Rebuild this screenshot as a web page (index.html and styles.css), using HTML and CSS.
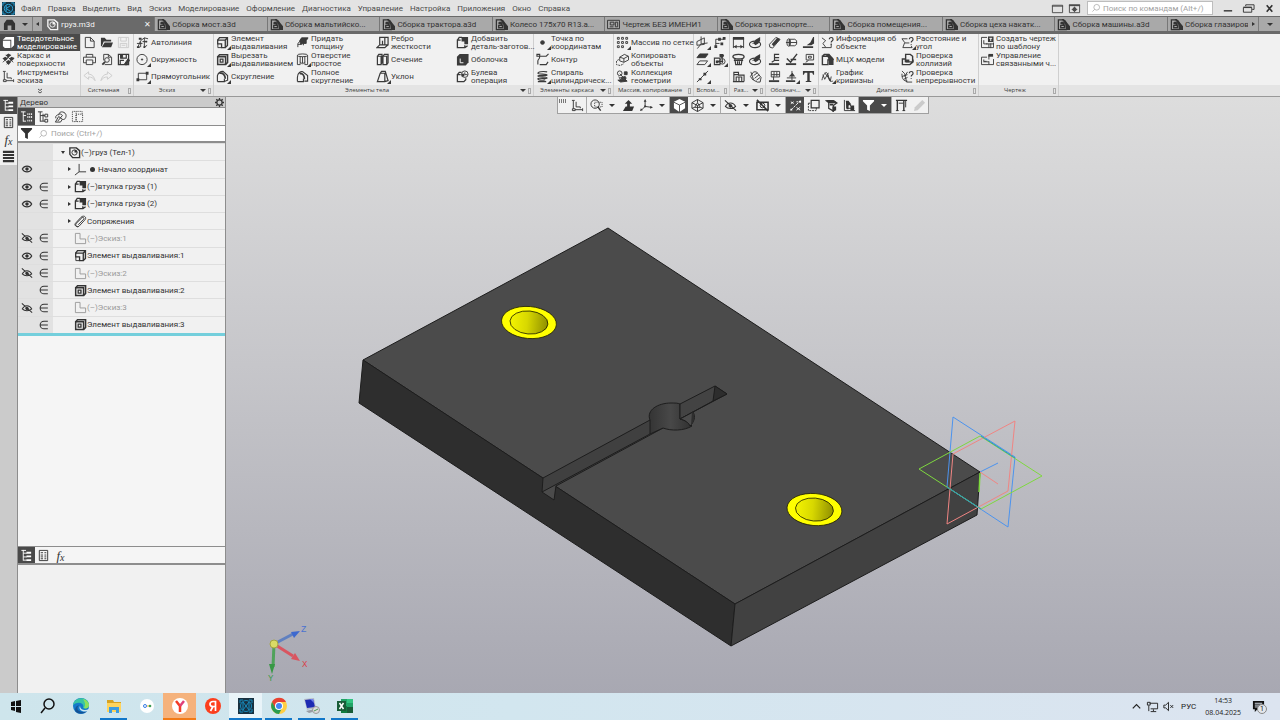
FILE: index.html
```html
<!DOCTYPE html>
<html lang="ru">
<head>
    <meta charset="UTF-8">
    <meta name="viewport" content="width=device-width, initial-scale=1.0">
    <title>груз.m3d</title>
    <link rel="stylesheet" href="styles.css">
</head>
<body>
    <!-- Icon set -->
    <svg class="sprite" aria-hidden="true">
        <symbol id="logo" viewBox="0 0 14 14"><path fill="#173443" stroke="none" d="M0 0h14v14H0z"/><path stroke="#2aa7dd" d="M1 4V1h3M10 1h3v3M13 10v3h-3M4 13H1v-3M4.500 3.500v7M4.500 7L9 4M4.500 7L9 10M7 2.500a4.500 4.500 0 1 1 0 9a4.500 4.500 0 0 1 0-9"/></symbol>
        <symbol id="part" viewBox="0 0 14 14"><path stroke-width="1.500" d="M2 2h7l3.500 3v7.500H5L2 9z"/><circle cx="7" cy="7" r="2.800"/><path fill="currentColor" stroke="none" d="M7 7V4a3 3 0 0 1 3 3z"/></symbol>
        <symbol id="asm" viewBox="0 0 14 14"><path fill="currentColor" stroke="none" d="M5 1h2l3 3 4 5v4h-4L9 7z"/><path stroke-width="1.400" d="M1.500 12.500V2H6c3 0 4 3 4 6v4.500zM4 6c0-2 4-2 4 1M4 6h2l2 2v2.500H4V8h4"/></symbol>
        <symbol id="sheet" viewBox="0 0 14 14"><path d="M.5 2.500h13v9H.5zM3.500 4.500h4v3h-4zM9 4.500h2.500v5H9zM3 9.500h4"/></symbol>
        <symbol id="home" viewBox="0 0 14 14"><path fill="currentColor" stroke="none" d="M1 13V6l3-4h6l3 4v7H9V8H5v5z"/></symbol>
        <symbol id="window" viewBox="0 0 14 14"><path d="M1.500 3.500h11v8h-11z"/><path d="M1 4.500h12"/></symbol>
        <symbol id="wingear" viewBox="0 0 14 14"><path d="M1.500 3.500h11v8h-11z"/><path stroke-width="2" d="M1 3.500h12"/><circle cx="7" cy="8" r="1.500" stroke-width="1.500"/><path d="M7 5v6M4 8h6"/></symbol>
        <symbol id="search" viewBox="0 0 14 14"><circle cx="8" cy="6" r="4"/><path d="M5 9l-3 3"/></symbol>
        <symbol id="solid" viewBox="0 0 14 14"><path fill="currentColor" stroke="none" d="M4 1h9v9l-3 3V4H1z"/><path fill="currentColor" stroke="none" d="M1 5h8v8H3L1 11z"/></symbol>
        <symbol id="surface" viewBox="0 0 14 14"><path fill="currentColor" stroke="none" d="M7 .5l3 2-3 2-3-2zM3.500 4l3 2-3 2.500-3-2.500zM10.500 4l3 2-3 2.500-3-2.500zM7 7.500l3 2-3 3.500-3-3.500z"/><path d="M1 10l8-8M5 12l8-7M4 2l8 8"/></symbol>
        <symbol id="sketchtools" viewBox="0 0 14 14"><path d="M2.500 2v8.500M1 1.500h3M1.500 10.500h3v2h-3zM4.500 11.500H12M12.500 10v3M5.500 3v5.500H10V10"/></symbol>
        <symbol id="new" viewBox="0 0 14 14"><path d="M2.500 1.500H8l4 4v7H2.500zM8 1.500v4h4"/></symbol>
        <symbol id="open" viewBox="0 0 14 14"><path fill="currentColor" stroke="none" d="M1 2h4l2 2h5v2H4l-2 5H1zM5 7h9l-2 5H2z"/></symbol>
        <symbol id="save" viewBox="0 0 14 14"><path d="M1.500 1.500h11v11h-11zM4 1.500v4h6v-4M3.500 12V8h7v4M5 10h4"/></symbol>
        <symbol id="saveas" viewBox="0 0 14 14"><path stroke-width="1.300" d="M1.500 1.500h11v11h-11zM4 1.500v4h6v-4M3.500 12V8h4"/><path fill="currentColor" d="M8 12l4-6 1.500 2-3.500 5zM4 2h2v3H4z"/></symbol>
        <symbol id="print" viewBox="0 0 14 14"><path d="M3.500 4.500V1.500h7v3M3.500 10.500h-3v-6h13v6h-3M3.500 7.500h7v5h-7z"/></symbol>
        <symbol id="preview" viewBox="0 0 14 14"><path d="M4 8V1.500h5l3.500 3v8H5M9 1.500v3h3"/><circle cx="7.500" cy="7.500" r="2.500"/><path stroke-width="2" d="M5.500 9.500l-3 3"/></symbol>
        <symbol id="undo" viewBox="0 0 14 14"><path d="M6 2L1 6l5 4V7.500c3 0 5 1 7 4-1-4-3-7-7-7z"/></symbol>
        <symbol id="redo" viewBox="0 0 14 14"><path d="M8 2l5 4-5 4V7.500c-3 0-5 1-7 4 1-4 3-7 7-7z"/></symbol>
        <symbol id="autoline" viewBox="0 0 14 14"><path d="M2 12L5 5l4-3 4 1M5 12V6M1 8h6M9 2v10l3-2M7 6h5"/><path fill="currentColor" stroke="none" d="M1 11h3v2H1zM3 2h3v2H3zM8 11h2v2H8zM10 5h2v2h-2z"/></symbol>
        <symbol id="circle" viewBox="0 0 14 14"><circle cx="6.500" cy="7" r="5.500"/><circle cx="6.500" cy="7" r=".7" fill="currentColor"/></symbol>
        <symbol id="rect" viewBox="0 0 14 14"><path d="M2.500 3.500h9v7h-9z"/><path fill="currentColor" stroke="none" d="M.5 9h3v3h-3zM10.500 2h3v3h-3z"/></symbol>
        <symbol id="extrude" viewBox="0 0 14 14"><path stroke-width="1.500" d="M1.800 4.500l2-2.700h8.500v8.500l-2.300 2.200M10 4.500l2-2.500"/><path stroke-width="1.400" d="M1.800 4.500H10v8H6V8.500H1.800z"/><path d="M2 8.500v4h4"/></symbol>
        <symbol id="cut" viewBox="0 0 14 14"><path stroke-width="1.600" d="M1.800 4h8.500v8.500H1.800zM1.800 4l2-2.200h8.700v8.500l-2.200 2.200"/><path stroke-width="1.400" d="M4.500 6.500h3v3.300h-3z"/></symbol>
        <symbol id="fillet" viewBox="0 0 14 14"><path stroke-width="1.200" d="M1.500 12.500V6c1-3 3-4.500 6-4.500L12.500 6v5L9 12.500M1.500 12.500H9V9.500"/><path stroke-width="1.800" d="M3.500 3.500c4-1 6.500 2 6.500 6"/></symbol>
        <symbol id="thick" viewBox="0 0 14 14"><path fill="currentColor" d="M4 5l2-3h7l-2 3v3L8 8l-3 1z"/><path d="M2 12V8l3-3M2 9h4M8 5v5"/></symbol>
        <symbol id="hole" viewBox="0 0 14 14"><path d="M1.500 2.500v10h3V4M12.500 2.500v10h-3V4M4.500 9.500L7 12l2.500-2.500M7 4v7"/><ellipse cx="7" cy="2.500" rx="5.500" ry="1.500"/></symbol>
        <symbol id="full" viewBox="0 0 14 14"><path stroke-width="1.200" d="M1.500 12.500V8c0-5 4-7 6-6l5 4v6H9M1.500 12.500H8V9.500"/><path stroke-width="1.800" d="M4 4c4-1 5 3 5 6"/></symbol>
        <symbol id="rib" viewBox="0 0 14 14"><path stroke-width="1.300" d="M4 1.500h9v8H4zM4 9.500l-3 3h8.500l3.500-3M9.500 2v7.500M7 9.500V5"/></symbol>
        <symbol id="section" viewBox="0 0 14 14"><path stroke-width="1.300" d="M1.500 3.500h4v9h-4zM7.500 3.500h4v9h-4zM1.500 3.500l1.500-2h3.500v8.500l-1 2M7.500 3.500l1.500-2h4v9l-1.500 2"/></symbol>
        <symbol id="draft" viewBox="0 0 14 14"><path stroke-width="1.300" d="M1.500 12.500l3-9h5v9zM4.500 3.500l1.500-2h4l3 10-3.500 1"/></symbol>
        <symbol id="addpart" viewBox="0 0 14 14"><path stroke-width="1.400" d="M5 4.500H1.500v8h8V10M1.500 4.500l2-3h3M9.500 12.500l3-2"/><path fill="currentColor" stroke="none" d="M6 1h7v8h-4V6H6z"/></symbol>
        <symbol id="shell" viewBox="0 0 14 14"><path fill="currentColor" stroke="none" d="M1 4l3-3h9.500v9l-3 3.500H1z"/><path stroke="#fff" d="M4.500 6v4.500H8"/></symbol>
        <symbol id="bool" viewBox="0 0 14 14"><path stroke-width="1.400" d="M5 5H1.500v7.500h7l2-2V9M1.500 5l2-2.500H6"/><circle cx="9.500" cy="4.500" r="3.500"/><path fill="currentColor" stroke="none" d="M6 4h3v3H6z"/><path d="M9.500 2.500v2.500h3"/></symbol>
        <symbol id="point" viewBox="0 0 14 14"><circle cx="7" cy="7" r="2" fill="currentColor"/></symbol>
        <symbol id="contour" viewBox="0 0 14 14"><path stroke-width="1.200" d="M4 12.500h7l2-3M2 12.500V9c0-3 2-1 2-5.500h7L13.500 1M1 1.500h3v2H1z"/></symbol>
        <symbol id="spiral" viewBox="0 0 14 14"><path stroke-width="1.200" d="M12 2c-5-1-10 0-10 1.500S12 4 12 5.500 2 5 2 6.500 12 7 12 8.500 2 8 2 9.500s5 2 8 1M2 12.500h9"/></symbol>
        <symbol id="grid" viewBox="0 0 14 14"><path d="M1.500 1.500h2v2h-2zM6 1.500h2v2H6zM10.500 1.500h2v2h-2zM1.500 6h2v2h-2zM6 6h2v2H6zM10.500 6h2v2h-2zM1.500 10.500h2v2h-2zM6 10.500h2v2H6z"/></symbol>
        <symbol id="copy" viewBox="0 0 14 14"><path d="M4 4.500l5-3 4.500 2v4L8.500 10 4 8.500zM4 4.500l4.500 1.500v4M13 3.500L8.500 6"/><path stroke-dasharray="2 1" d="M3 7L.5 8.500v4l4 1 4-2"/></symbol>
        <symbol id="geomcoll" viewBox="0 0 14 14"><circle cx="4" cy="3.500" r="2.500"/><path fill="currentColor" d="M9 2h3v3H9zM5 8l5-1 1 2-5 1zM2 11l8-1 2 2-7 1z"/><path d="M4 4l7 7M3 7l2 4"/></symbol>
        <symbol id="plane" viewBox="0 0 14 14"><path d="M5.500.5v8l7-1M5.500 8.500l-4 5M1 10V6l8-4v7z"/></symbol>
        <symbol id="nodes" viewBox="0 0 14 14"><path d="M3 12V3.500h9M3 8h4"/><path fill="currentColor" stroke="none" d="M1.500 10h3v3h-3zM5.500 2h3v3h-3zM10.500 1h3v3h-3zM8 7h3v3H8z"/></symbol>
        <symbol id="planes" viewBox="0 0 14 14"><path fill="currentColor" d="M4 1h9l-3 4H1z"/><path d="M4 8.500h8.500l-3 4H1z"/></symbol>
        <symbol id="shapes" viewBox="0 0 14 14"><path stroke-width="1.200" d="M1.500 5.500h6v7h-6zM4 9h7M10 6v5"/><circle cx="10" cy="9" r="3"/><path fill="currentColor" stroke="none" d="M7 1h4l1 2-2 3-3-2zM3 8h3v3H3z"/></symbol>
        <symbol id="axis" viewBox="0 0 14 14"><path d="M1 13L13 1"/><path fill="currentColor" stroke="none" d="M3 9h3v2H3zM8 3h3v3H8z"/></symbol>
        <symbol id="dim" viewBox="0 0 14 14"><path d="M1.500 2v11M12.500 2v11M1.500 11.500h11"/><path fill="currentColor" stroke="none" d="M1 1h12v3H1zM2 11.500l3-2v4zM12 11.500l-3-2v4z"/></symbol>
        <symbol id="dimr" viewBox="0 0 14 14"><ellipse cx="6.500" cy="9" rx="6" ry="3.500" stroke-width="1.200"/><path fill="currentColor" stroke="none" d="M3 9l3-3 1-2 5-3v4l-2 3-3 2-2-2z"/></symbol>
        <symbol id="dimd" viewBox="0 0 14 14"><ellipse cx="7" cy="4" rx="6" ry="2.500" stroke-width="1.500"/><path stroke-width="1.300" d="M3 6l1 6.500h6L11 6M2 8h10M6 9v3M8 9v3"/></symbol>
        <symbol id="dimb" viewBox="0 0 14 14"><path stroke-width="1.200" d="M2 12.500V2.500h5v3h6v7M4.500 12V7.500h6V12M2 5h5M7.500 8v4M1 12.500h12"/></symbol>
        <symbol id="dima" viewBox="0 0 14 14"><path d="M2 2l3 9 4 2h3l1-5-5-6H5L1.500 7l3 4M5 6l4-3M6 9l5-4M8 11l4-3"/></symbol>
        <symbol id="bolt" viewBox="0 0 14 14"><path d="M1.500 9l7-7.500 4.500 2L5 13l-3-1z"/><path fill="currentColor" stroke="none" d="M4 9l6-7 3 2-7 7z"/></symbol>
        <symbol id="thread" viewBox="0 0 14 14"><path d="M4.500 3.500h6L12.500 5v4l-2 1.500h-6zM5 3.500v7M1 7h12"/><ellipse cx="4" cy="7" rx="2" ry="4"/></symbol>
        <symbol id="tag" viewBox="0 0 14 14"><path fill="currentColor" stroke="none" d="M1 11h11v2H1zM5 10l4-3 3-6h1v7l-3 2z"/></symbol>
        <symbol id="tage" viewBox="0 0 14 14"><path fill="currentColor" stroke="none" d="M1 11h11v2H1z"/><path stroke-width="1.300" d="M4 10l3-2V1.500h5M7 5h5M7 8h5"/></symbol>
        <symbol id="tagv" viewBox="0 0 14 14"><path fill="currentColor" stroke="none" d="M1 11h11v2H1z"/><path stroke-width="1.500" d="M2 6l4 4 7-9M6 7h6"/></symbol>
        <symbol id="tagb" viewBox="0 0 14 14"><path fill="currentColor" stroke="none" d="M1 11h12v2H1z"/><path d="M4.500 1.500h8v6h-8zM7 3.500h3v2H7zM7 8l-3 2"/></symbol>
        <symbol id="tagg" viewBox="0 0 14 14"><path fill="currentColor" stroke="none" d="M1 11h11v2H1z"/><path d="M3.500 1.500h9v6h-9zM6.500 2v5M9.500 2v5M3.500 5h9M6 7v4"/></symbol>
        <symbol id="taga" viewBox="0 0 14 14"><path fill="currentColor" stroke="none" d="M1 11h10v2H1zM4 7h7L8 3z"/><path d="M7.500 1v10M2 8.500h10"/></symbol>
        <symbol id="letter" viewBox="0 0 14 14"><path fill="currentColor" stroke="none" d="M1 1h12v4h-1l-1-2H8.300v8.500l1.700.5v1H4v-1l1.700-.5V3H3L2 5H1z"/></symbol>
        <symbol id="info" viewBox="0 0 14 14"><path d="M1 2l4 3-3 3 3 4M1 12.500h10V8"/><path stroke-width="1.300" d="M9 3.500c0-2.500 4-2.500 4 0S11 5 11 7M11 8.500v1"/></symbol>
        <symbol id="mass" viewBox="0 0 14 14"><path stroke-width="1.500" d="M1.500 3.500v9h6v-5l5-.500-4-3.500zM1.500 3.500l2-2H9"/><path fill="currentColor" stroke="none" d="M4 1h5l4.500 5v7h-5V8L7 4z"/></symbol>
        <symbol id="graph" viewBox="0 0 14 14"><path d="M1 11c2-9 6-11 7-4s3 5 5 5M2 5l2 5 4-7M4 3l6 8M7 5l3 7 1-5"/></symbol>
        <symbol id="dist" viewBox="0 0 14 14"><path d="M7 3H1l3 4-2 5.500h10l-1-2M4 7.500h5"/><path stroke-width="1.300" d="M9 3.500c0-2.500 4-2.500 4 0S11 5 11 7M11 8.500v1"/></symbol>
        <symbol id="collide" viewBox="0 0 14 14"><path stroke-width="1.500" d="M5 6.500H1.500v6h8l3.500-3V7M5 9.500v-8h5l2.500 2v6H5"/><path fill="currentColor" stroke="none" d="M4 7h5v3H4z"/></symbol>
        <symbol id="contin" viewBox="0 0 14 14"><path d="M1 1l3 3 2 9h6M1 4c0 6 2 8 6 8M1 7l6-2M7 2L4 7M3 10l4-2"/><path stroke-width="1.300" d="M9 3.500c0-2.500 4-2.500 4 0S11 5 11 7M11 8.500v1"/></symbol>
        <symbol id="makedraw" viewBox="0 0 14 14"><path d="M.5 4V1.500h6M.5 4v8.500h13V7M3 4.500v4h4M5.500 8.500h8M8.500 8.500v4M10.500 8v5"/><path fill="currentColor" stroke="none" d="M7.500.5h6v6h-6z"/><path stroke="#fff" d="M9 2.500h3M10.500 2.500v3"/></symbol>
        <symbol id="linkdraw" viewBox="0 0 14 14"><path d="M.5 4.500h6M.5 4.500v8h13v-6M3 7v2h3M2.500 9.500h6M8.500 9v3.500M8.500 2v5"/><path fill="currentColor" stroke="none" d="M8 1h5v3H8z"/></symbol>
        <symbol id="tree" viewBox="0 0 14 14"><path d="M3.500 1v11.500M1.500 1.500h5M3.500 4.500h4M3.500 8.500h4M3.500 12h4"/><path fill="currentColor" stroke="none" d="M7 3h5v2H7zM7 7h5v2H7zM7 11h5v2H7z"/></symbol>
        <symbol id="treedots" viewBox="0 0 14 14"><path d="M3.500 2v10.500M3.500 6h3M3.500 12h3M1 2h5"/><path stroke-dasharray="1 1" stroke-width="2" d="M8 4.500h6M8 7.500h6M8 11.500h6"/></symbol>
        <symbol id="branch" viewBox="0 0 14 14"><path d="M3.500 2v10.500M1 2h5M3.500 6h5M3.500 12h5M6.500 4v8"/><path d="M8.500 4.500h3v3h-3zM8.500 10h3v3h-3z"/></symbol>
        <symbol id="cloud" viewBox="0 0 14 14"><path d="M2 9c-1-3 2-4 3-4 1-5 8-3 8 1 0 3-2 5-4 4M5 5c1-1 3-1 4 1M4 12l5-6M1.500 13L5 7l4 3-2 3z"/></symbol>
        <symbol id="dotbox" viewBox="0 0 14 14"><path stroke-dasharray="1 1" d="M1.500 1.500h4v11h-4zM5.500 4.500h7v8h-7zM6 1.500h6v3"/></symbol>
        <symbol id="filter" viewBox="0 0 14 14"><path fill="currentColor" stroke="none" d="M1 1h12v1.500L8.500 7v6l-3-1.500V7L1 2.500z"/></symbol>
        <symbol id="props" viewBox="0 0 14 14"><path d="M2.500 1.500h9v11h-9zM4 4h2.500M8 4h2M4 6.500h2.500M8 6.500h2M4 8.500h2.500M8 8.500h2M4 10.500h2.500M8 10.500h2"/></symbol>
        <symbol id="layers" viewBox="0 0 14 14"><path stroke-width="2.200" d="M1 2h12M1 5.300h12M1 8.700h12M1 12h12"/></symbol>
        <symbol id="gear" viewBox="0 0 14 14"><circle cx="7" cy="7" r="4" stroke-width="1.800"/><path stroke-width="2" d="M7 0v3M7 11v3M0 7h3M11 7h3M2 2l2 2M10 10l2 2M12 2l-2 2M4 10l-2 2"/></symbol>
        <symbol id="eye" viewBox="0 0 14 14"><path stroke-width="1.300" d="M1.500 7C4 2.500 10 2.500 12.500 7 10 11.500 4 11.500 1.500 7z"/><circle cx="7" cy="7" r="1.500" fill="currentColor"/></symbol>
        <symbol id="noeye" viewBox="0 0 14 14"><path stroke-width="1.200" d="M1.500 8C4 3 10 3 12.500 8 10 11 4 11 1.500 8zM1 1.500l12 11"/><circle cx="7" cy="7.500" r="1.500" fill="currentColor"/></symbol>
        <symbol id="member" viewBox="0 0 14 14"><path stroke-width="1.200" d="M11.500 2.500H7a4.500 4.500 0 0 0 0 9h4.500M2.500 7h9"/></symbol>
        <symbol id="origin" viewBox="0 0 14 14"><path d="M5.500 1v8.500H13M5.500 9.500L1 13"/></symbol>
        <symbol id="clip" viewBox="0 0 14 14"><path d="M1.500 9l6-6.500c3-3 7 0 4 3l-6 6.500c-2 2-5-1-3-3l6-6c1-1 3 0 2 1.500l-6 6M1.500 9c-1.500 2 1 4 3 3.500"/></symbol>
        <symbol id="sketch" viewBox="0 0 14 14"><path d="M1.500 1.500h5v6h6v5h-11z"/></symbol>
        <symbol id="zoomin" viewBox="0 0 14 14"><circle cx="5.500" cy="5.500" r="4.500"/><path stroke-width="1.500" d="M8.500 8.500l3 4"/><path stroke-dasharray="1 1" d="M5 3.500h8v5H5z"/></symbol>
        <symbol id="orient" viewBox="0 0 14 14"><path fill="currentColor" stroke="none" d="M4 8h9l-2 5H1zM5.500 10V5H3l4-4 4 4H8.500v5z"/></symbol>
        <symbol id="axes" viewBox="0 0 14 14"><path d="M5.500 2v6l7 1M5.500 8l-4 4"/><path fill="currentColor" stroke="none" d="M5.500 0L7 3H4zM14 9l-3-1.500v3zM0 13l1-3 2 2zM4.500 7h2v2h-2z"/></symbol>
        <symbol id="cube" viewBox="0 0 14 14"><path fill="currentColor" stroke="none" d="M7 0l6 3v7l-6 4-6-4V3z"/><path stroke="#4a4a4a" d="M1 3.500l6 3 6-3M7 6.500V14"/></symbol>
        <symbol id="wire" viewBox="0 0 14 14"><path d="M7 .5L13 4v6l-6 3.500L1 10V4zM1 4l6 3 6-3M7 7v6.500M7 .5V4l-3 5L1 10M4 9h6l3 1M10 9L7 4"/></symbol>
        <symbol id="camera" viewBox="0 0 14 14"><path stroke-width="1.700" d="M1 3.500h12v8H1zM1 1l12 12"/><circle cx="7" cy="7" r="2.500"/></symbol>
        <symbol id="snap" viewBox="0 0 14 14"><path stroke-dasharray="3 1" d="M2 12L12 2"/><path d="M2 3l3 2M2 5l3-2M8 3h2M8 9l4 3M8 12l4-3"/><path fill="currentColor" stroke="none" d="M1.500 10.500h2v2h-2zM11 2h2v2h-2z"/></symbol>
        <symbol id="boxes" viewBox="0 0 14 14"><path stroke-width="1.300" d="M4.500 1.500h8.500v8H4.500z"/><path stroke-dasharray="2 1" d="M1.500 4.500v8h8.500M1.500 4.500h3M10 9.500v3"/></symbol>
        <symbol id="fold" viewBox="0 0 14 14"><path stroke-width="1.300" d="M1.500 2h8l3 2H4zM4 4v6l5 3V7l4-3"/><path fill="currentColor" stroke="none" d="M1 1h8l4 3H4zM8 8h4v4l-4 2zM5 5h4v2H5z"/></symbol>
        <symbol id="dyn" viewBox="0 0 14 14"><path d="M1.500 1v11.500H13M4 3v7h8M4 3l7 7"/><path fill="currentColor" stroke="none" d="M3 2h3l3 4-3 1v4H4zM8 7h4v5H8z"/></symbol>
        <symbol id="caliper" viewBox="0 0 14 14"><path stroke-width="1.500" d="M1 1.500h12M2.500 2v11M9.500 2v11"/><path d="M4 4.500h5M11.500 2v7M1 12.500h3M8 12.500h3"/></symbol>
        <symbol id="pencil" viewBox="0 0 14 14"><path fill="currentColor" stroke="none" d="M10 1l3 3-8 8-4 1 1-4z"/></symbol>
    </svg>

    <div class="app">
        <header class="menubar">
            <svg class="icon logo"><use href="#logo"/></svg>
            <nav class="menu">
                <button>Файл</button>
                <button>Правка</button>
                <button>Выделить</button>
                <button>Вид</button>
                <button>Эскиз</button>
                <button>Моделирование</button>
                <button>Оформление</button>
                <button>Диагностика</button>
                <button>Управление</button>
                <button>Настройка</button>
                <button>Приложения</button>
                <button>Окно</button>
                <button>Справка</button>
            </nav>
            <div class="window-tools">
                <button aria-label="Экран"><svg class="icon"><use href="#window"/></svg></button>
                <button aria-label="Настройка экрана"><svg class="icon"><use href="#wingear"/></svg></button>
                <label class="command-search">
                    <svg class="icon"><use href="#search"/></svg>
                    <input type="text" placeholder="Поиск по командам (Alt+/)" aria-label="Поиск по командам">
                </label>
                <button class="sys" aria-label="Свернуть"><svg class="icon" viewBox="0 0 14 14"><path stroke-width="1.500" d="M3 9.500h9"/></svg></button>
                <button class="sys" aria-label="Восстановить"><svg class="icon" viewBox="0 0 14 14"><path d="M4 4.500V3h9v5h-2M1.500 6h9v5h-9zM1.500 5.500h9"/></svg></button>
                <button class="sys" aria-label="Закрыть"><svg class="icon" viewBox="0 0 14 14"><path stroke-width="1.800" d="M4 3.500l6 7M10 3.500l-6 7"/></svg></button>
            </div>
        </header>

        <div class="tabs">
            <button class="tab-home" aria-label="Главная"><svg class="icon"><use href="#home"/></svg></button>
            <button class="tab-drop" aria-label="Список"><span class="caret"></span></button>
            <button class="tab-prev" aria-label="Назад"><span class="caret left"></span></button>
            <div class="tab-list">
                <button class="tab active"><svg class="icon"><use href="#part"/></svg><span>груз.m3d</span><i class="close"></i></button>
                <button class="tab"><svg class="icon"><use href="#asm"/></svg><span>Сборка мост.a3d</span></button>
                <button class="tab"><svg class="icon"><use href="#asm"/></svg><span>Сборка мальтийско...</span></button>
                <button class="tab"><svg class="icon"><use href="#asm"/></svg><span>Сборка трактора.a3d</span></button>
                <button class="tab"><svg class="icon"><use href="#asm"/></svg><span>Колесо 175x70 R13.a...</span></button>
                <button class="tab"><svg class="icon"><use href="#sheet"/></svg><span>Чертеж БЕЗ ИМЕНИ1</span></button>
                <button class="tab"><svg class="icon"><use href="#asm"/></svg><span>Сборка транспорте...</span></button>
                <button class="tab"><svg class="icon"><use href="#asm"/></svg><span>Сборка помещения...</span></button>
                <button class="tab"><svg class="icon"><use href="#asm"/></svg><span>Сборка цеха накатк...</span></button>
                <button class="tab"><svg class="icon"><use href="#asm"/></svg><span>Сборка машины.a3d</span></button>
                <button class="tab"><svg class="icon"><use href="#asm"/></svg><span>Сборка глазиров</span></button>
            </div>
            <button class="tab-next" aria-label="Вперёд"><span class="caret right"></span></button>
            <button class="tab-menu" aria-label="Все вкладки"><span class="caret"></span></button>
        </div>

        <section class="ribbon">
            <div class="group modes">
                <div class="tools">
                    <button class="tool active"><svg class="icon"><use href="#solid"/></svg><span>Твердотельное<br>моделирование</span></button>
                    <button class="tool"><svg class="icon"><use href="#surface"/></svg><span>Каркас и<br>поверхности</span></button>
                    <button class="tool"><svg class="icon"><use href="#sketchtools"/></svg><span>Инструменты<br>эскиза</span></button>
                </div>
                <div class="group-name"><svg class="chevrons" viewBox="0 0 6 6"><path d="M1 1l2 1.500L5 1M1 3.500L3 5l2-1.500"/></svg></div>
            </div>
            <div class="group small wide3">
                <div class="tools">
                    <button aria-label="Создать"><svg class="icon"><use href="#new"/></svg></button>
                    <button aria-label="Открыть"><svg class="icon"><use href="#open"/></svg></button>
                    <button aria-label="Сохранить" disabled><svg class="icon"><use href="#save"/></svg></button>
                    <button aria-label="Печать"><svg class="icon"><use href="#print"/></svg></button>
                    <button aria-label="Просмотр"><svg class="icon"><use href="#preview"/></svg></button>
                    <button aria-label="Сохранить как"><svg class="icon"><use href="#saveas"/></svg></button>
                    <button aria-label="Отменить" disabled><svg class="icon"><use href="#undo"/></svg></button>
                    <button aria-label="Повторить" disabled><svg class="icon"><use href="#redo"/></svg></button>
                </div>
                <div class="group-name"><span>Системная</span><i class="grip"></i></div>
            </div>
            <div class="group">
                <div class="tools">
                    <button class="tool"><svg class="icon"><use href="#autoline"/></svg><span>Автолиния</span></button>
                    <button class="tool more"><svg class="icon"><use href="#circle"/></svg><span>Окружность</span></button>
                    <button class="tool more"><svg class="icon"><use href="#rect"/></svg><span>Прямоугольник</span></button>
                </div>
                <div class="group-name"><span>Эскиз</span><i class="caret"></i><i class="grip"></i></div>
            </div>
            <div class="group">
                <div class="tools">
                    <button class="tool more"><svg class="icon"><use href="#extrude"/></svg><span>Элемент<br>выдавливания</span></button>
                    <button class="tool more"><svg class="icon"><use href="#cut"/></svg><span>Вырезать<br>выдавливанием</span></button>
                    <button class="tool more"><svg class="icon"><use href="#fillet"/></svg><span>Скругление</span></button>
                    <button class="tool"><svg class="icon"><use href="#thick"/></svg><span>Придать<br>толщину</span></button>
                    <button class="tool more"><svg class="icon"><use href="#hole"/></svg><span>Отверстие<br>простое</span></button>
                    <button class="tool"><svg class="icon"><use href="#full"/></svg><span>Полное<br>скругление</span></button>
                    <button class="tool"><svg class="icon"><use href="#rib"/></svg><span>Ребро<br>жесткости</span></button>
                    <button class="tool"><svg class="icon"><use href="#section"/></svg><span>Сечение</span></button>
                    <button class="tool more"><svg class="icon"><use href="#draft"/></svg><span>Уклон</span></button>
                    <button class="tool"><svg class="icon"><use href="#addpart"/></svg><span>Добавить<br>деталь-заготов...</span></button>
                    <button class="tool"><svg class="icon"><use href="#shell"/></svg><span>Оболочка</span></button>
                    <button class="tool"><svg class="icon"><use href="#bool"/></svg><span>Булева<br>операция</span></button>
                </div>
                <div class="group-name"><span>Элементы тела</span><i class="caret"></i><i class="grip"></i></div>
            </div>
            <div class="group">
                <div class="tools">
                    <button class="tool more"><svg class="icon"><use href="#point"/></svg><span>Точка по<br>координатам</span></button>
                    <button class="tool"><svg class="icon"><use href="#contour"/></svg><span>Контур</span></button>
                    <button class="tool more"><svg class="icon"><use href="#spiral"/></svg><span>Спираль<br>цилиндрическ...</span></button>
                </div>
                <div class="group-name"><span>Элементы каркаса</span><i class="caret"></i><i class="grip"></i></div>
            </div>
            <div class="group">
                <div class="tools">
                    <button class="tool more"><svg class="icon"><use href="#grid"/></svg><span>Массив по сетке</span></button>
                    <button class="tool"><svg class="icon"><use href="#copy"/></svg><span>Копировать<br>объекты</span></button>
                    <button class="tool"><svg class="icon"><use href="#geomcoll"/></svg><span>Коллекция<br>геометрии</span></button>
                </div>
                <div class="group-name"><span>Массив, копирование</span><i class="grip"></i></div>
            </div>
            <div class="group small">
                <div class="tools">
                    <button class="more" aria-label="Плоскость"><svg class="icon"><use href="#plane"/></svg></button>
                    <button aria-label="Точки"><svg class="icon"><use href="#nodes"/></svg></button>
                    <button class="more" aria-label="Смещённая плоскость"><svg class="icon"><use href="#planes"/></svg></button>
                    <button class="more" aria-label="Локальная СК"><svg class="icon"><use href="#shapes"/></svg></button>
                    <button class="more" aria-label="Ось"><svg class="icon"><use href="#axis"/></svg></button>
                </div>
                <div class="group-name"><span>Вспом...</span><i class="grip"></i></div>
            </div>
            <div class="group small">
                <div class="tools">
                    <button aria-label="Линейный размер"><svg class="icon"><use href="#dim"/></svg></button>
                    <button aria-label="Радиальный размер"><svg class="icon"><use href="#dimr"/></svg></button>
                    <button aria-label="Диаметральный размер"><svg class="icon"><use href="#dimd"/></svg></button>
                    <button aria-label="Размер окружности"><svg class="icon"><use href="#dimr"/></svg></button>
                    <button aria-label="Размер от базы"><svg class="icon"><use href="#dimb"/></svg></button>
                    <button aria-label="Угловой размер"><svg class="icon"><use href="#dima"/></svg></button>
                </div>
                <div class="group-name"><span>Раз...</span><i class="caret"></i><i class="grip"></i></div>
            </div>
            <div class="group small wide3">
                <div class="tools">
                    <button aria-label="Условная резьба"><svg class="icon"><use href="#bolt"/></svg></button>
                    <button aria-label="Резьба"><svg class="icon"><use href="#thread"/></svg></button>
                    <button aria-label="Шероховатость"><svg class="icon"><use href="#tag"/></svg></button>
                    <button aria-label="Выноска"><svg class="icon"><use href="#tage"/></svg></button>
                    <button aria-label="Клеймо"><svg class="icon"><use href="#tagv"/></svg></button>
                    <button aria-label="База"><svg class="icon"><use href="#tagb"/></svg></button>
                    <button aria-label="Допуск формы"><svg class="icon"><use href="#tagg"/></svg></button>
                    <button class="more" aria-label="Позиция"><svg class="icon"><use href="#taga"/></svg></button>
                    <button aria-label="Надпись"><svg class="icon"><use href="#letter"/></svg></button>
                </div>
                <div class="group-name"><span>Обознач...</span><i class="caret"></i><i class="grip"></i></div>
            </div>
            <div class="group">
                <div class="tools">
                    <button class="tool"><svg class="icon"><use href="#info"/></svg><span>Информация об<br>объекте</span></button>
                    <button class="tool"><svg class="icon"><use href="#mass"/></svg><span>МЦХ модели</span></button>
                    <button class="tool more"><svg class="icon"><use href="#graph"/></svg><span>График<br>кривизны</span></button>
                    <button class="tool more"><svg class="icon"><use href="#dist"/></svg><span>Расстояние и<br>угол</span></button>
                    <button class="tool"><svg class="icon"><use href="#collide"/></svg><span>Проверка<br>коллизий</span></button>
                    <button class="tool"><svg class="icon"><use href="#contin"/></svg><span>Проверка<br>непрерывности</span></button>
                </div>
                <div class="group-name"><span>Диагностика</span><i class="grip"></i></div>
            </div>
            <div class="group">
                <div class="tools">
                    <button class="tool"><svg class="icon"><use href="#makedraw"/></svg><span>Создать чертеж<br>по шаблону</span></button>
                    <button class="tool"><svg class="icon"><use href="#linkdraw"/></svg><span>Управление<br>связанными ч...</span></button>
                </div>
                <div class="group-name"><span>Чертеж</span><i class="grip"></i></div>
            </div>
            <div class="group rest"><div class="tools"></div><div class="group-name"></div></div>
        </section>

        <main class="workspace">
            <aside class="rail">
                <button class="active" aria-label="Дерево"><svg class="icon"><use href="#tree"/></svg></button>
                <button aria-label="Параметры"><svg class="icon"><use href="#props"/></svg></button>
                <button class="fx" aria-label="Переменные">f<sub>x</sub></button>
                <button aria-label="Слои"><svg class="icon"><use href="#layers"/></svg></button>
            </aside>

            <section class="panel">
                <div class="panel-title"><span>Дерево</span><button aria-label="Настройка панели"><svg class="icon"><use href="#gear"/></svg></button></div>
                <div class="panel-tools">
                    <button class="active" aria-label="Структура"><svg class="icon"><use href="#treedots"/></svg></button>
                    <button aria-label="Последовательность"><svg class="icon"><use href="#branch"/></svg></button>
                    <button aria-label="Зоны"><svg class="icon"><use href="#cloud"/></svg></button>
                    <button aria-label="Область"><svg class="icon"><use href="#dotbox"/></svg></button>
                </div>
                <label class="panel-search">
                    <svg class="icon funnel"><use href="#filter"/></svg>
                    <svg class="icon glass"><use href="#search"/></svg>
                    <input type="text" placeholder="Поиск (Ctrl+/)" aria-label="Поиск в дереве">
                </label>
                <ul class="tree">
                    <li><span class="cell"></span><span class="cell"></span><div class="node root"><i class="caret"></i><svg class="icon"><use href="#part"/></svg><span>(–)груз (Тел-1)</span></div></li>
                    <li><span class="cell"><svg class="icon"><use href="#eye"/></svg></span><span class="cell"></span><div class="node"><i class="caret right"></i><svg class="icon"><use href="#origin"/></svg><b class="dot"></b><span>Начало координат</span></div></li>
                    <li><span class="cell"><svg class="icon"><use href="#eye"/></svg></span><span class="cell"><svg class="icon"><use href="#member"/></svg></span><div class="node"><i class="caret right"></i><svg class="icon"><use href="#addpart"/></svg><span>(–)втулка груза (1)</span></div></li>
                    <li><span class="cell"><svg class="icon"><use href="#eye"/></svg></span><span class="cell"><svg class="icon"><use href="#member"/></svg></span><div class="node"><i class="caret right"></i><svg class="icon"><use href="#addpart"/></svg><span>(–)втулка груза (2)</span></div></li>
                    <li><span class="cell"></span><span class="cell"></span><div class="node"><i class="caret right"></i><svg class="icon"><use href="#clip"/></svg><span>Сопряжения</span></div></li>
                    <li><span class="cell"><svg class="icon"><use href="#noeye"/></svg></span><span class="cell"><svg class="icon"><use href="#member"/></svg></span><div class="node leaf hidden"><svg class="icon"><use href="#sketch"/></svg><span>(–)Эскиз:1</span></div></li>
                    <li><span class="cell"><svg class="icon"><use href="#eye"/></svg></span><span class="cell"><svg class="icon"><use href="#member"/></svg></span><div class="node leaf"><svg class="icon"><use href="#extrude"/></svg><span>Элемент выдавливания:1</span></div></li>
                    <li><span class="cell"><svg class="icon"><use href="#noeye"/></svg></span><span class="cell"><svg class="icon"><use href="#member"/></svg></span><div class="node leaf hidden"><svg class="icon"><use href="#sketch"/></svg><span>(–)Эскиз:2</span></div></li>
                    <li><span class="cell"></span><span class="cell"><svg class="icon"><use href="#member"/></svg></span><div class="node leaf"><svg class="icon"><use href="#cut"/></svg><span>Элемент выдавливания:2</span></div></li>
                    <li><span class="cell"><svg class="icon"><use href="#noeye"/></svg></span><span class="cell"><svg class="icon"><use href="#member"/></svg></span><div class="node leaf hidden"><svg class="icon"><use href="#sketch"/></svg><span>(–)Эскиз:3</span></div></li>
                    <li><span class="cell"></span><span class="cell"><svg class="icon"><use href="#member"/></svg></span><div class="node leaf"><svg class="icon"><use href="#cut"/></svg><span>Элемент выдавливания:3</span></div></li>
                </ul>
                <div class="panel-tools lower">
                    <button class="active" aria-label="Дерево"><svg class="icon"><use href="#tree"/></svg></button>
                    <button aria-label="Параметры"><svg class="icon"><use href="#props"/></svg></button>
                    <button class="fx" aria-label="Переменные">f<sub>x</sub></button>
                </div>
                <div class="panel-lower"></div>
            </section>

            <section class="viewport">
                <div class="view-bar">
                    <span class="view-grip"></span>
                    <button aria-label="Эскиз"><svg class="icon"><use href="#sketchtools"/></svg></button>
                    <i class="sep"></i>
                    <button aria-label="Масштаб"><svg class="icon"><use href="#zoomin"/></svg></button>
                    <button class="drop" aria-label="Ещё"><i class="caret"></i></button>
                    <button aria-label="Нормально к"><svg class="icon"><use href="#orient"/></svg></button>
                    <button aria-label="Ориентация"><svg class="icon"><use href="#axes"/></svg></button>
                    <button class="drop" aria-label="Ещё"><i class="caret"></i></button>
                    <i class="sep"></i>
                    <button class="active" aria-label="Полутоновое"><svg class="icon"><use href="#cube"/></svg></button>
                    <button aria-label="Каркас"><svg class="icon"><use href="#wire"/></svg></button>
                    <button class="drop" aria-label="Ещё"><i class="caret"></i></button>
                    <i class="sep"></i>
                    <button aria-label="Скрыть"><svg class="icon"><use href="#noeye"/></svg></button>
                    <button class="drop" aria-label="Ещё"><i class="caret"></i></button>
                    <button aria-label="Скрыть все объекты"><svg class="icon"><use href="#camera"/></svg></button>
                    <button class="drop" aria-label="Ещё"><i class="caret"></i></button>
                    <i class="sep"></i>
                    <button class="active" aria-label="Привязки"><svg class="icon"><use href="#snap"/></svg></button>
                    <button aria-label="Сечение"><svg class="icon"><use href="#boxes"/></svg></button>
                    <button aria-label="Разнести"><svg class="icon"><use href="#fold"/></svg></button>
                    <button aria-label="Перестроить"><svg class="icon"><use href="#dyn"/></svg></button>
                    <i class="sep"></i>
                    <button class="active" aria-label="Фильтр"><svg class="icon"><use href="#filter"/></svg></button>
                    <button class="drop active" aria-label="Ещё"><i class="caret"></i></button>
                    <i class="sep"></i>
                    <button aria-label="Измерить"><svg class="icon"><use href="#caliper"/></svg></button>
                    <button aria-label="Цвет" disabled><svg class="icon"><use href="#pencil"/></svg></button>
                </div>

                <!-- Plate with two bushings -->
                <svg class="model" viewBox="226 97 1054 596" role="img" aria-label="Модель груза">
                    <defs>
                        <linearGradient id="bore"><stop offset="0" stop-color="#f4f400"/><stop offset=".45" stop-color="#d8d800"/><stop offset="1" stop-color="#8f8f00"/></linearGradient>
                        <linearGradient id="pit"><stop offset="0" stop-color="#343434"/><stop offset=".5" stop-color="#484848"/><stop offset="1" stop-color="#303030"/></linearGradient>
                    </defs>
                    <g stroke="#1d1d1d" stroke-linejoin="round">
                        <path fill="#4b4b4b" d="M608 228L980 472 735 604 363 360z"/>
                        <path fill="#2e2e2e" d="M363 360L735 604 731 646 359 403z"/>
                        <path fill="#414141" d="M735 604L980 472 977 515 731 646z"/>
                        <path fill="#404040" stroke="none" d="M543 478L650 420v14L556 486 554 500 542 492z"/>
                        <path fill="#4b4b4b" stroke="none" d="M542 492l13-7-1 15z"/>
                        <path fill="none" d="M650 420L543 478 542 492 554 500 556 486 663 428M542 492L650 434"/>
                        <path fill="url(#pit)" d="M650 434V420C646 410 658 403 671 403c4 0 7 0 9 1v15c5 1 9 4 12 7-8 5-21 5-29 2z"/>
                        <path fill="#434343" d="M680 404L715 386 727 394 693 412 680 419z"/>
                        <path fill="#2d2d2d" d="M715 386L727 394 713 401z"/>
                        <path fill="none" d="M713 401L680 419"/>
                        <path fill="#4b4b4b" d="M680 419l13-7c3 5 1 10-3 14-1-3-5-6-10-7z"/>
                        <path fill="#2e2e2e" stroke="none" d="M692 412c4 4 2 10-1 13z"/>
                    </g>
                    <g stroke="#1f1f00" stroke-width=".8">
                        <ellipse cx="529" cy="322.500" rx="27.500" ry="16" fill="#ff0" transform="rotate(5 529 322)"/>
                        <ellipse cx="529" cy="322.500" rx="19" ry="11.500" fill="url(#bore)" transform="rotate(5 529 322)"/>
                        <ellipse cx="814.500" cy="509.500" rx="27.500" ry="16" fill="#ff0" transform="rotate(5 814 509)"/>
                        <ellipse cx="814.500" cy="509.500" rx="19" ry="11.500" fill="url(#bore)" transform="rotate(5 814 509)"/>
                    </g>
                    <g fill="none" stroke-width="1">
                        <path stroke="#4b93ee" d="M953 417L1015 457 1008 527 947 487zM980 472l18-9"/>
                        <path stroke="#f08583" d="M1015 421L1008 491 947 524 953 454zM980 472l18 12"/>
                        <path stroke="#7ed83f" d="M919 469L980 436 1042 476 981 509z"/>
                        <path stroke="#2b9bb8" d="M947 487l34 22M981 436l34 22"/>
                        <path stroke="#7ed83f" stroke-width="1.500" d="M980 473l-1 19"/>
                    </g>
                    <g class="triad" stroke-width="3">
                        <path stroke="#6080c0" d="M274 644l19-10"/><path fill="#3d69cf" d="M300 631l-9 1 3 6z"/><text x="301" y="632" fill="#4b72d0">Z</text>
                        <path stroke="#d95560" d="M274 644l19 12"/><path fill="#d95560" d="M300 661l-5-8-4 6z"/><text x="302" y="667" fill="#d8434b">X</text>
                        <path stroke="#50a25b" d="M274 644l-1 23"/><path fill="#389845" d="M272 674l-3-10h6z"/><text x="268" y="681" fill="#3e9a4b">Y</text>
                        <circle cx="274" cy="644" r="4" fill="#dadb65" stroke="#a4a442" stroke-width="1"/>
                    </g>
                </svg>
            </section>
        </main>

        <footer class="taskbar">
            <button class="task narrow" aria-label="Пуск"><svg viewBox="0 0 18 18"><path fill="#111" d="M4 5l4-1v5H4zM9 4l5-1v6H9zM4 10h4v4l-4-1zM9 10h5v6l-5-1z"/></svg></button>
            <button class="task narrow" aria-label="Поиск"><svg viewBox="0 0 18 18"><circle cx="10" cy="7" r="5" fill="none" stroke="#111" stroke-width="1.500"/><path stroke="#111" stroke-width="1.500" d="M6 11l-4 5"/></svg></button>
            <button class="task" aria-label="Edge"><svg viewBox="0 0 18 18"><circle cx="9" cy="9" r="8" fill="#1479ca"/><path fill="#38c4a4" d="M1 8C2-1 17-1 17 8c0 4-4 4-6 3 2-5-5-7-10-3z"/><path fill="#8de15c" d="M11 2c4 1 6 4 6 6 0 3-3 4-5 3 2-3 1-6-1-9z"/><path fill="#145396" d="M7 8c-4 4 0 9 8 6-5 5-15 2-11-4 1-1 2-2 3-2z"/><path fill="#cfe7ef" d="M8 9c0 4 5 5 9 3l-1 2c-6 2-10-2-8-5z"/></svg></button>
            <button class="task run" aria-label="Проводник"><svg viewBox="0 0 18 18"><path fill="#d7a222" d="M2 3h6l1 2h7v10H2z"/><path fill="#ffd45d" d="M2 6h14v9H2z"/><path fill="#3d9ce0" d="M4 10h10v6h-3v-3H7v3H4z"/></svg></button>
            <button class="task" aria-label="Пароли"><svg viewBox="0 0 18 18"><circle cx="9" cy="9" r="7" fill="#fff"/><circle cx="7" cy="9" r="1.500" fill="none" stroke="#367de6"/><path stroke="#fabb2d" stroke-width="1.200" d="M9 9h2"/><circle cx="12" cy="9" r="1.300" fill="#3a9b52"/></svg></button>
            <button class="task alert" aria-label="Яндекс Браузер"><svg viewBox="0 0 18 18"><circle cx="9" cy="9" r="8" fill="#fff"/><path fill="none" stroke="#f33b24" stroke-width="2.500" d="M5 4l4 5v6"/><path stroke="#e0407a" stroke-width="2.500" d="M9 9l4-5"/></svg></button>
            <button class="task" aria-label="Яндекс"><svg viewBox="0 0 18 18"><circle cx="9" cy="9" r="8" fill="#fc3f1d"/><path fill="none" stroke="#fff" stroke-width="1.700" d="M11.500 14V4.500H9c-4 0-4 5 0 5h2.500M9 9.500L6.500 14"/></svg></button>
            <button class="task run current" aria-label="КОМПАС"><svg viewBox="0 0 18 18"><path fill="#183141" d="M1 1h16v16H1z"/><g fill="none" stroke="#178bbd"><circle cx="9" cy="9" r="5.500"/><path d="M3 6V3h3M12 3h3v3M15 12v3h-3M6 15H3v-3M6 5l6 8M12 5l-6 8M6 5v8M12 5v8"/></g></svg></button>
            <button class="task run" aria-label="Chrome"><svg viewBox="0 0 18 18"><circle cx="9" cy="9" r="8" fill="#ffce43"/><path fill="#e64234" d="M2 5c3-6 12-5 14 0H9L5 11z"/><path fill="#2a9c50" d="M2 5c-3 6 2 12 7 12l3-6-6 1z"/><circle cx="9" cy="9" r="4" fill="#fff"/><circle cx="9" cy="9" r="3" fill="#4285f4"/></svg></button>
            <button class="task run" aria-label="Удалённый доступ"><svg viewBox="0 0 18 18"><path fill="#b5bac8" d="M1 2l10-1 2 10-9 2z"/><path fill="#1d2bb3" d="M2 3l8-1 2 8-8 1z"/><path fill="#7182ed" d="M7 2l3 0 1 4z"/><path fill="#989da5" d="M3 14l9-2 1 2-7 2z"/><circle cx="13" cy="13" r="3.500" fill="#ddd" stroke="#999"/><path stroke="#4c9a51" d="M11 14l4-2"/></svg></button>
            <button class="task run" aria-label="Excel"><svg viewBox="0 0 18 18"><path fill="#21a366" d="M5 2h12v14H5z"/><path fill="#107c41" d="M5 9h6v7H5z"/><path fill="#33c481" d="M11 2h6v4h-6z"/><path fill="#185c37" d="M11 10h6v6h-6zM1 4h9v10H1z"/><path stroke="#fff" stroke-width="1.500" d="M3.500 6l4 6M7.500 6l-4 6"/></svg></button>
            <div class="tray">
                <svg class="icon" viewBox="0 0 14 14"><path stroke-width="1.300" d="M3 9l4-4 4 4"/></svg>
                <svg class="icon" viewBox="0 0 14 14"><path d="M4 3.500h8.500v6H5M8 10v2M5 12.500h6M1.500 2.500h3v3h-3zM3 6v6"/></svg>
                <svg class="icon" viewBox="0 0 14 14"><path d="M2 5.500h2l3-3v9l-3-3H2zM9 5.500l3 3M12 5.500l-3 3"/></svg>
                <span class="lang">РУС</span>
                <time class="clock">14:53<br>08.04.2025</time>
                <button class="notes" aria-label="Уведомления"><svg class="icon" viewBox="0 0 14 14"><path fill="currentColor" stroke="none" d="M1 1h12v9H6l-3 3v-3H1z"/><path stroke="#dbe4f0" d="M3 3.500h8M3 5.500h8M3 7.500h5"/></svg><span class="badge">1</span></button>
            </div>
        </footer>
    </div>
</body>
</html>
```
FILE: styles.css
```css
* {
    box-sizing: border-box;
}
body {
    margin: 0;
    font-family: Roboto, "Open Sans", sans-serif;
    font-size: 8px;
    color: #333;
}
button {
    display: flex;
    align-items: center;
    justify-content: center;
    margin: 0;
    padding: 0;
    border: 0;
    background: none;
    color: inherit;
    font: inherit;
}
input {
    min-width: 0;
    padding: 0;
    border: 0;
    outline: 0;
    background: none;
    font: inherit;
}
input::placeholder {
    color: #a2a2a2;
}
.sprite {
    position: absolute;
    width: 0;
    height: 0;
}
.icon {
    flex: none;
    width: 13px;
    height: 13px;
    fill: none;
    stroke: currentColor;
}
.app {
    display: flex;
    flex-direction: column;
    height: 100vh;
    overflow: hidden;
}
.caret {
    border: 3px solid transparent;
    border-top-color: currentColor;
    border-bottom-width: 0;
}
.caret.left,
.caret.right {
    border: 2px solid transparent;
    border-right: 3px solid currentColor;
    border-left-width: 0;
}
.caret.right {
    border-right-width: 0;
    border-left: 3px solid currentColor;
}

/* Menu */
.menubar {
    display: flex;
    align-items: center;
    height: 16px;
    flex: none;
    padding-left: 2px;
    background: #e3e3e3;
    color: #4b4b4b;
}
.menu {
    display: flex;
    gap: 7px;
    margin-left: 6px;
}
.window-tools {
    display: flex;
    align-items: center;
    margin-left: auto;
}
.window-tools > button {
    width: 17px;
}
.window-tools > .sys {
    width: 21px;
    color: #333;
}
.command-search {
    display: flex;
    align-items: center;
    width: 126px;
    height: 14px;
    margin: 0 4px;
    padding-left: 3px;
    border: 1px solid #bdbdbd;
    background: #fff;
    color: #a2a2a2;
}
.command-search .icon {
    width: 10px;
    height: 10px;
    margin-right: 2px;
}
.command-search input {
    flex: 1;
}

/* Document tabs */
.tabs {
    display: flex;
    height: 18px;
    flex: none;
    padding-top: 1px;
    border-bottom: 3px solid #6a6a6a;
    background: #6a6a6a;
    color: #333;
}
.tabs > button {
    background: #a9a9a9;
}
.tab-home {
    width: 18px;
}
.tab-drop {
    width: 14px;
}
.tabs .tab-prev {
    width: 10px;
    border-left: 1px solid #7c7c7c;
}
.tab-next {
    width: 10px;
}
.tabs .tab-menu {
    width: 22px;
    border-left: 1px solid #7c7c7c;
}
.tab-list {
    display: flex;
    flex: 1;
    overflow: hidden;
}
.tab {
    flex: 0 0 9.33%;
    justify-content: flex-start;
    padding-left: 2px;
    gap: 2px;
    border-right: 1px solid #777;
    background: #a9a9a9;
    white-space: nowrap;
}
.tab.active {
    flex-basis: 9.4%;
    padding-left: 4px;
    background: #6a6a6a;
    color: #f4f4f4;
}
.tab .close {
    margin: 0 3px 0 auto;
    font-style: normal;
}
.tab .close::after {
    content: "✕";
}

/* Ribbon */
.ribbon {
    display: flex;
    flex: none;
    border-bottom: 1px solid #999;
    background: #f1f1f1;
    color: #3a3a3a;
}
.group {
    flex: none;
    border-right: 1px solid #cfcfcf;
}
.group.rest {
    flex: 1;
    border-right: 0;
}
.tools {
    display: grid;
    grid-auto-flow: column;
    grid-template-rows: repeat(3, 17px);
    grid-auto-columns: 80px;
    height: 51px;
}
.group:not(.modes) .tools {
    margin-right: -1px;
}
.group.small .tools {
    grid-auto-flow: row;
    grid-template-columns: repeat(2, 17px);
    margin-right: 1px;
}
.group.wide3 .tools {
    grid-template-columns: repeat(3, 17px);
}
.tool {
    justify-content: flex-start;
    gap: 2px;
    padding-left: 2px;
    line-height: 8px;
    text-align: left;
    white-space: nowrap;
}
.tools .active {
    background: #4a4a4a;
    color: #fff;
}
.tools button {
    position: relative;
}
.tools .more::after {
    content: "";
    position: absolute;
    left: 13px;
    bottom: 1px;
    border-left: 4px solid transparent;
    border-bottom: 4px solid currentColor;
}
.tools button:disabled,
.view-bar button:disabled {
    color: #cbcbcb;
}
.group-name {
    display: flex;
    align-items: center;
    height: 11px;
    background: #e4e4e4;
    font-family: "Open Sans", sans-serif;
    font-size: 6px;
    line-height: 11px;
    white-space: nowrap;
}
.group-name span {
    flex: 1;
    text-align: center;
}
.grip {
    width: 3px;
    height: 6px;
    margin: 0 2px;
    border: 1px solid #aaa;
}
.chevrons {
    width: 6px;
    height: 6px;
    margin: 0 auto;
    fill: none;
    stroke: #555;
}

/* Side panels */
.workspace {
    display: flex;
    flex: 1;
    min-height: 0;
}
.rail {
    width: 17px;
    background: #cbcbcb;
}
.rail button {
    width: 17px;
    height: 17px;
    background: #f0f0f0;
}
.rail .active,
.panel-tools .active,
.view-bar .active {
    background: #4a4a4a;
    color: #fff;
}
button.fx {
    font-family: "Liberation Serif", serif;
    font-size: 13px;
    font-style: italic;
    line-height: 13px;
}
.fx sub {
    padding-top: 4px;
    font-size: 10px;
    line-height: 9px;
}
.panel {
    display: flex;
    flex-direction: column;
    width: 209px;
    border: solid #8d8d8d;
    border-width: 0 1px;
    background: #f5f5f5;
}
.panel-title {
    display: flex;
    align-items: center;
    justify-content: space-between;
    height: 11px;
    padding: 0 1px 0 2px;
    border-bottom: 1px solid #8d8d8d;
    background: #cbcbcb;
}
.panel-title .icon {
    width: 9px;
    height: 9px;
}
.panel-tools {
    display: flex;
    height: 18px;
    border-bottom: 1px solid #8d8d8d;
    background: #f5f5f5;
}
.panel-tools button {
    width: 17px;
}
.panel-search {
    display: flex;
    align-items: center;
    height: 17px;
    border-bottom: 2px solid #8d8d8d;
    background: #fff;
}
.panel-search .funnel {
    width: 17px;
}
.panel-search .glass {
    width: 10px;
    height: 10px;
    margin: 0 3px;
    color: #a2a2a2;
}
.panel-search input {
    flex: 1;
}
.tree {
    display: grid;
    grid-template-rows: repeat(11, 1fr);
    flex: 1 0 193px;
    max-height: 193px;
    margin: 0;
    padding: 0;
    border-bottom: 3px solid #74cfdc;
    list-style: none;
}
.tree li {
    display: flex;
    border-top: 1px solid #dedede;
    background: #f1f1f1;
}
.tree .cell {
    display: flex;
    align-items: center;
    justify-content: center;
    width: 17px;
    background: #e2e2e2;
}
.tree .cell + .cell {
    width: 18px;
}
.tree .cell .icon {
    width: 12px;
    height: 12px;
}
.node {
    display: flex;
    align-items: center;
    padding-left: 15px;
    white-space: nowrap;
}
.node.root {
    padding-left: 8px;
}
.node.leaf {
    padding-left: 21px;
}
.node .caret {
    margin-right: 3px;
    border-width: 2px;
    border-top-width: 3px;
    border-bottom-width: 0;
}
.node .caret.right {
    border-width: 2px 0 2px 3px;
}
.node.hidden {
    color: #999;
}
.node .dot {
    width: 5px;
    height: 5px;
    margin: 0 3px;
    border-radius: 50%;
    background: #333;
}
.panel-tools.lower {
    height: 19px;
    margin-top: auto;
    border-top: 1px solid #8d8d8d;
    border-bottom: 2px solid #8d8d8d;
}
.panel-lower {
    height: 128px;
    background: #f1f1f1;
}

/* 3D view */
.viewport {
    position: relative;
    flex: 1;
    min-width: 0;
    background: linear-gradient(#dddddd, #c6c6ca 45%, #a8a8b2);
}
.model {
    display: block;
    width: 100%;
    height: 100%;
}
.triad {
    font-family: "Liberation Mono", monospace;
    font-size: 9px;
}
.view-bar {
    position: absolute;
    top: 0;
    left: 331px;
    display: flex;
    height: 17px;
    border: 1px solid #a0a0a0;
    border-top: 0;
    background: #f1f1f1;
}
.view-bar button {
    width: 18px;
}
.view-bar .drop {
    width: 14px;
}
.view-bar .sep {
    width: 1px;
    background: #aaa;
}
.view-grip {
    width: 10px;
    height: 4px;
    margin-top: 2px;
    border-right: 1px solid #f1f1f1;
    border-left: 1px solid #f1f1f1;
    background: repeating-linear-gradient(90deg, #777 0 1px, #f1f1f1 1px 2px);
}

/* Taskbar */
.taskbar {
    display: flex;
    height: 27px;
    flex: none;
    background: linear-gradient(90deg, #cee5ec, #d2e6ef 40%, #dce4f0);
    color: #222;
}
.task {
    width: 33px;
    border-bottom: 2px solid transparent;
}
.task.narrow {
    width: 32px;
}
.task svg {
    width: 18px;
    height: 18px;
}
.task.run {
    border-bottom-color: #1177c9;
}
.task.run:not(.current) {
    width: 27px;
    margin: 0 3px;
}
.task.current {
    background: #e9f4f9;
}
.task.alert {
    border-bottom-color: #f27a16;
    background: #f5b27c;
}
.tray {
    display: flex;
    align-items: center;
    gap: 3px;
    margin-left: auto;
    padding-right: 15px;
}
.lang {
    margin-left: 3px;
}
.clock {
    margin: 0 8px 0 6px;
    font-family: "Open Sans", sans-serif;
    font-size: 7px;
    line-height: 12px;
    text-align: center;
}
.notes {
    position: relative;
    color: #111;
}
.badge {
    position: absolute;
    left: 5px;
    top: 4px;
    width: 10px;
    height: 10px;
    border: 1px solid #888;
    border-radius: 50%;
    background: #e3e7ec;
    font-size: 7px;
    line-height: 8px;
}
```
